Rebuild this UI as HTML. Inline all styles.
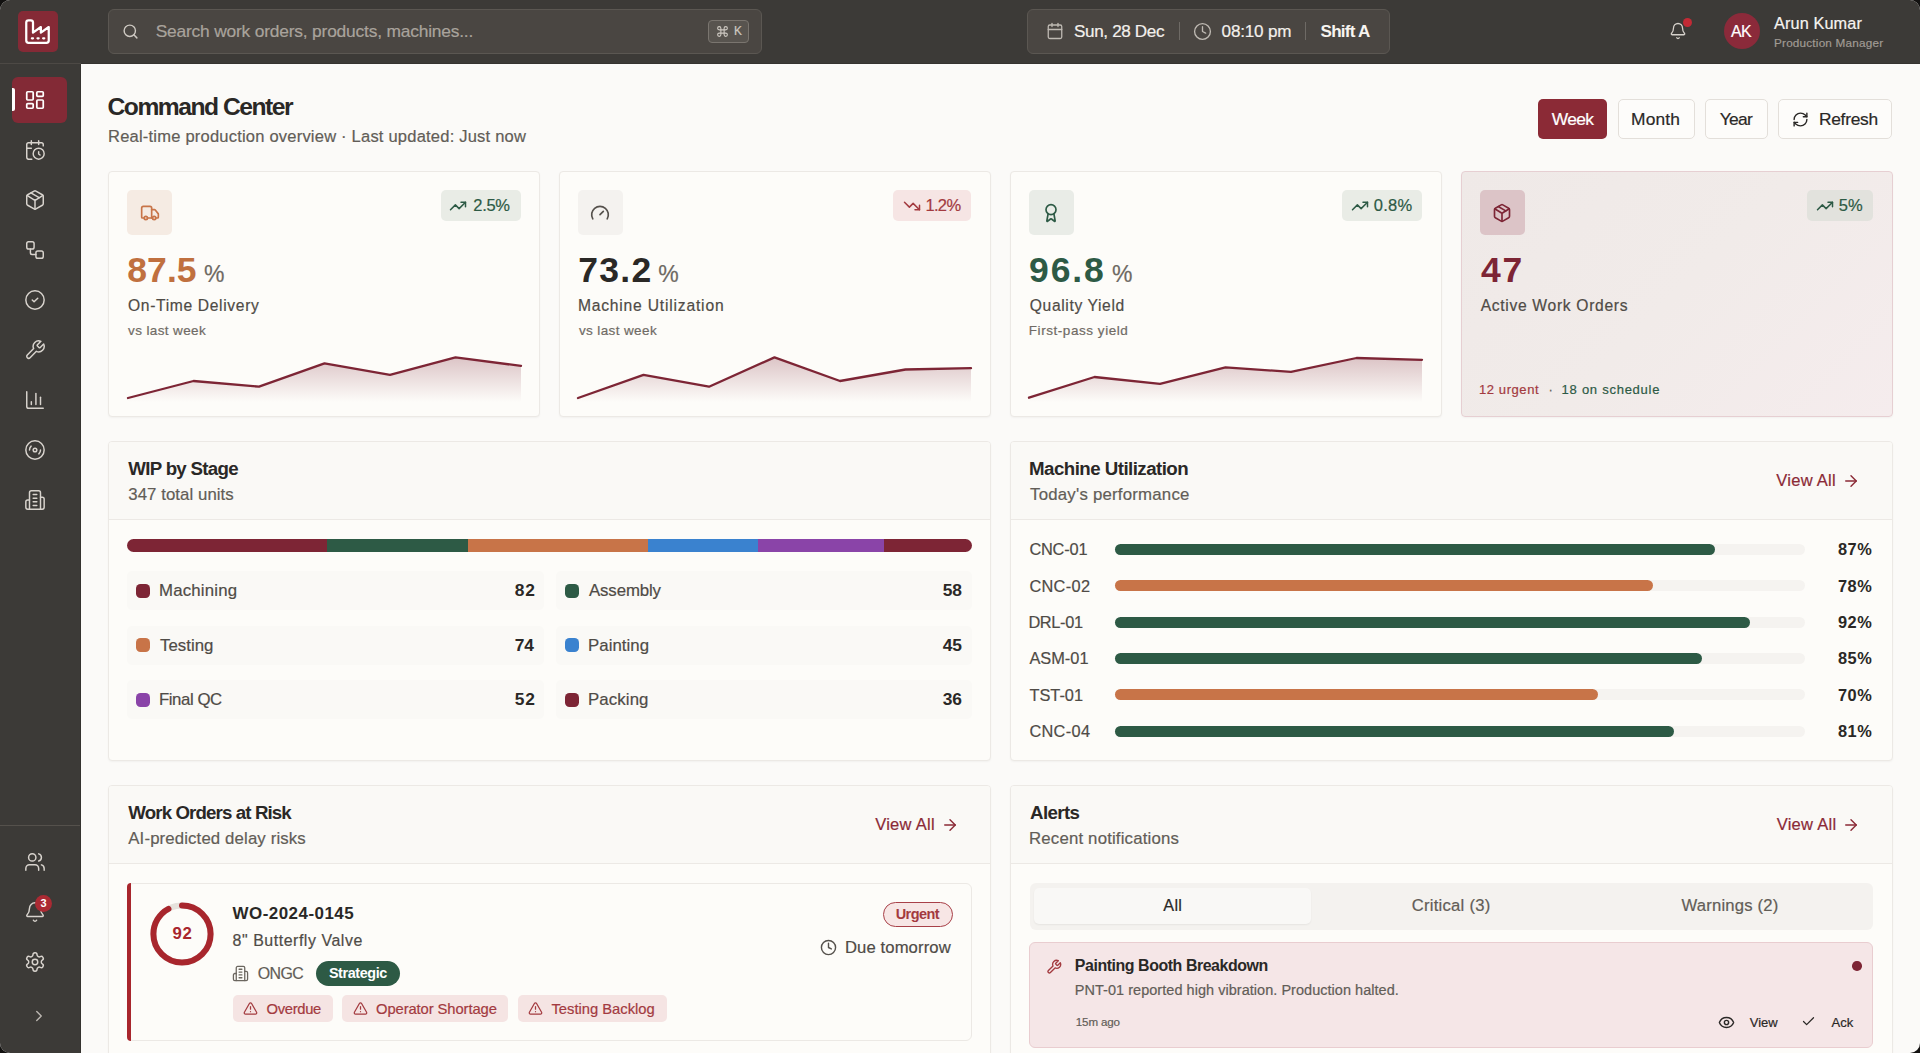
<!DOCTYPE html>
<html><head><meta charset="utf-8">
<style>
*{box-sizing:border-box;margin:0;padding:0}
html,body{width:1920px;height:1053px;overflow:hidden;background:#121110}
body{font-family:"Liberation Sans",sans-serif;color:#2a2826;position:relative}
.abs{position:absolute}
svg{display:block}
.ic{fill:none;stroke:currentColor;stroke-width:2;stroke-linecap:round;stroke-linejoin:round}
#app{position:absolute;left:0;top:0;width:1920px;height:1053px;background:#fbfaf8;border-radius:10px;overflow:hidden}
.t{white-space:nowrap;position:absolute;line-height:1}
.r{-webkit-text-stroke:0.2px currentColor}
</style></head>
<body>
<div id="app">
<div class="abs" style="left:0px;top:0px;width:1920px;height:63px;background:#3c3a37"></div>
<div class="abs" style="left:0px;top:63px;width:81px;height:1px;background:#4d4945"></div>
<div class="abs" style="left:81px;top:63px;width:1839px;height:1px;background:#353330"></div>
<div class="abs" style="left:17.5px;top:11px;width:40.5px;height:41px;background:#852a36;border-radius:5px"></div>
<svg class="abs ic" style="left:24px;top:17.8px;color:#fff;stroke-width:2" width="27" height="27" viewBox="0 0 24 24"><path d="M2 20a2 2 0 0 0 2 2h16a2 2 0 0 0 2-2V8l-7 5V8l-7 5V4a2 2 0 0 0-2-2H4a2 2 0 0 0-2 2Z"/><path d="M17 18h1"/><path d="M12 18h1"/><path d="M7 18h1"/></svg>
<div class="abs" style="left:108px;top:9px;width:654px;height:45px;background:#4a4642;border:1px solid #5b5752;border-radius:6px"></div>
<svg class="abs ic" style="left:122px;top:23px;color:#cdc8c1;stroke-width:2" width="17" height="17" viewBox="0 0 24 24"><circle cx="11" cy="11" r="8"/><path d="m21 21-4.3-4.3"/></svg>
<div class="t r" style="left:155.70px;top:22.97px;font-size:17.39px;color:#a9a39c;letter-spacing:-0.195px;">Search work orders, products, machines...</div>
<div class="abs" style="left:708px;top:20px;width:41px;height:23px;background:#58544f;border:1px solid #7a756f;border-radius:4px"></div>
<svg class="abs ic" style="left:715.5px;top:25px;color:#cfcac3;stroke-width:2" width="13" height="13" viewBox="0 0 24 24"><path d="M15 6v12a3 3 0 1 0 3-3H6a3 3 0 1 0 3 3V6a3 3 0 1 0-3 3h12a3 3 0 1 0-3-3"/></svg>
<div class="t r" style="left:734.00px;top:25.63px;font-size:11.88px;color:#cfcac3;">K</div>
<div class="abs" style="left:1027px;top:9px;width:363px;height:45px;background:#4a4642;border:1px solid #5b5752;border-radius:6px"></div>
<svg class="abs ic" style="left:1046px;top:22px;color:#bfbab3;stroke-width:1.7" width="18" height="18" viewBox="0 0 24 24"><rect x="3" y="4" width="18" height="18" rx="2"/><path d="M16 2v4"/><path d="M8 2v4"/><path d="M3 10h18"/></svg>
<div class="t r" style="left:1074.00px;top:23.42px;font-size:17.10px;color:#f3f0ec;letter-spacing:-0.353px;">Sun, 28 Dec</div>
<div class="abs" style="left:1179px;top:22px;width:1px;height:18px;background:#6e6a65"></div>
<svg class="abs ic" style="left:1193px;top:22px;color:#bfbab3;stroke-width:1.7" width="19" height="19" viewBox="0 0 24 24"><circle cx="12" cy="12" r="10"/><path d="M12 6v6l4 2"/></svg>
<div class="t r" style="left:1221.60px;top:23.42px;font-size:17.10px;color:#f3f0ec;letter-spacing:-0.205px;">08:10 pm</div>
<div class="abs" style="left:1305px;top:22px;width:1px;height:18px;background:#6e6a65"></div>
<div class="t" style="left:1320.60px;top:23.42px;font-size:17.10px;color:#f7f4f0;font-weight:700;letter-spacing:-0.788px;">Shift A</div>
<svg class="abs ic" style="left:1669px;top:22px;color:#d6d1cb;stroke-width:1.7" width="18" height="18" viewBox="0 0 24 24"><path d="M10.268 21a2 2 0 0 0 3.464 0"/><path d="M3.262 15.326A1 1 0 0 0 4 17h16a1 1 0 0 0 .74-1.673C19.41 13.956 18 12.499 18 8A6 6 0 0 0 6 8c0 4.499-1.411 5.956-2.738 7.326"/></svg>
<div class="abs" style="left:1683px;top:18px;width:9px;height:9px;background:#c22a35;border-radius:50%"></div>
<div class="abs" style="left:1724px;top:13px;width:36px;height:36px;background:#8b2a3a;border-radius:50%"></div>
<div class="t r" style="left:1731.00px;top:23.80px;font-size:15.94px;color:#ffffff;letter-spacing:-0.630px;">AK</div>
<div class="t r" style="left:1774.00px;top:14.64px;font-size:16.30px;color:#f7f4f0;letter-spacing:0.108px;">Arun Kumar</div>
<div class="t r" style="left:1774.00px;top:36.61px;font-size:11.74px;color:#a09b94;letter-spacing:0.198px;">Production Manager</div>
<div class="abs" style="left:0px;top:64px;width:80px;height:989px;background:#3c3a37"></div>
<div class="abs" style="left:80px;top:64px;width:1px;height:989px;background:#34322f"></div>
<div class="abs" style="left:12px;top:77px;width:55px;height:46px;background:#832a36;border-radius:6px"></div>
<div class="abs" style="left:12px;top:88px;width:3px;height:23px;background:#fff;border-radius:0 2px 2px 0"></div>
<svg class="abs ic" style="left:24px;top:89px;color:#ffffff;stroke-width:1.9" width="22" height="22" viewBox="0 0 24 24"><rect width="7" height="9" x="3" y="3" rx="1"/><rect width="7" height="5" x="14" y="3" rx="1"/><rect width="7" height="9" x="14" y="12" rx="1"/><rect width="7" height="5" x="3" y="16" rx="1"/></svg>
<svg class="abs ic" style="left:24px;top:139px;color:#d8d3cd;stroke-width:1.6" width="22" height="22" viewBox="0 0 24 24"><path d="M21 7.5V6a2 2 0 0 0-2-2H5a2 2 0 0 0-2 2v14a2 2 0 0 0 2 2h3.5"/><path d="M16 2v4"/><path d="M8 2v4"/><path d="M3 10h5"/><path d="M17.5 17.5 16 16.3V14"/><circle cx="16" cy="16" r="6"/></svg>
<svg class="abs ic" style="left:24px;top:189px;color:#d8d3cd;stroke-width:1.6" width="22" height="22" viewBox="0 0 24 24"><path d="M11 21.73a2 2 0 0 0 2 0l7-4A2 2 0 0 0 21 16V8a2 2 0 0 0-1-1.73l-7-4a2 2 0 0 0-2 0l-7 4A2 2 0 0 0 3 8v8a2 2 0 0 0 1 1.73z"/><path d="M12 22V12"/><path d="m3.3 7 7.703 4.734a2 2 0 0 0 1.994 0L20.7 7"/><path d="m7.5 4.27 9 5.15"/></svg>
<svg class="abs ic" style="left:24px;top:239px;color:#d8d3cd;stroke-width:1.6" width="22" height="22" viewBox="0 0 24 24"><rect width="8" height="8" x="3" y="3" rx="2"/><path d="M7 11v4a2 2 0 0 0 2 2h4"/><rect width="8" height="8" x="13" y="13" rx="2"/></svg>
<svg class="abs ic" style="left:24px;top:289px;color:#d8d3cd;stroke-width:1.6" width="22" height="22" viewBox="0 0 24 24"><circle cx="12" cy="12" r="10"/><path d="m9 12 2 2 4-4"/></svg>
<svg class="abs ic" style="left:24px;top:339px;color:#d8d3cd;stroke-width:1.6" width="22" height="22" viewBox="0 0 24 24"><path d="M14.7 6.3a1 1 0 0 0 0 1.4l1.6 1.6a1 1 0 0 0 1.4 0l3.77-3.77a6 6 0 0 1-7.94 7.94l-6.91 6.91a2.12 2.12 0 0 1-3-3l6.91-6.91a6 6 0 0 1 7.94-7.94l-3.76 3.76z"/></svg>
<svg class="abs ic" style="left:24px;top:389px;color:#d8d3cd;stroke-width:1.6" width="22" height="22" viewBox="0 0 24 24"><path d="M3 3v16a2 2 0 0 0 2 2h16"/><path d="M18 17V9"/><path d="M13 17V5"/><path d="M8 17v-3"/></svg>
<svg class="abs ic" style="left:24px;top:439px;color:#d8d3cd;stroke-width:1.6" width="22" height="22" viewBox="0 0 24 24"><circle cx="12" cy="12" r="10"/><path d="M6 12c0-1.7.7-3.2 1.8-4.2"/><circle cx="12" cy="12" r="2"/><path d="M18 12c0 1.7-.7 3.2-1.8 4.2"/></svg>
<svg class="abs ic" style="left:24px;top:489px;color:#d8d3cd;stroke-width:1.6" width="22" height="22" viewBox="0 0 24 24"><path d="M6 22V4a2 2 0 0 1 2-2h8a2 2 0 0 1 2 2v18Z"/><path d="M6 12H4a2 2 0 0 0-2 2v6a2 2 0 0 0 2 2h2"/><path d="M18 9h2a2 2 0 0 1 2 2v9a2 2 0 0 1-2 2h-2"/><path d="M10 6h4"/><path d="M10 10h4"/><path d="M10 14h4"/><path d="M10 18h4"/></svg>
<div class="abs" style="left:0px;top:825px;width:80px;height:1px;background:#55514c"></div>
<svg class="abs ic" style="left:24px;top:851px;color:#d8d3cd;stroke-width:1.6" width="22" height="22" viewBox="0 0 24 24"><path d="M16 21v-2a4 4 0 0 0-4-4H6a4 4 0 0 0-4 4v2"/><circle cx="9" cy="7" r="4"/><path d="M22 21v-2a4 4 0 0 0-3-3.87"/><path d="M16 3.13a4 4 0 0 1 0 7.75"/></svg>
<svg class="abs ic" style="left:24px;top:901px;color:#d8d3cd;stroke-width:1.6" width="22" height="22" viewBox="0 0 24 24"><path d="M10.268 21a2 2 0 0 0 3.464 0"/><path d="M3.262 15.326A1 1 0 0 0 4 17h16a1 1 0 0 0 .74-1.673C19.41 13.956 18 12.499 18 8A6 6 0 0 0 6 8c0 4.499-1.411 5.956-2.738 7.326"/></svg>
<div class="abs" style="left:35px;top:895px;width:17px;height:17px;background:#ab2a33;border-radius:50%"></div>
<div class="t" style="left:40.50px;top:898.47px;font-size:11.00px;color:#fff;font-weight:700;">3</div>
<svg class="abs ic" style="left:24px;top:951px;color:#d8d3cd;stroke-width:1.6" width="22" height="22" viewBox="0 0 24 24"><path d="M12.22 2h-.44a2 2 0 0 0-2 2v.18a2 2 0 0 1-1 1.73l-.43.25a2 2 0 0 1-2 0l-.15-.08a2 2 0 0 0-2.73.73l-.22.38a2 2 0 0 0 .73 2.73l.15.1a2 2 0 0 1 1 1.72v.51a2 2 0 0 1-1 1.74l-.15.09a2 2 0 0 0-.73 2.73l.22.38a2 2 0 0 0 2.73.73l.15-.08a2 2 0 0 1 2 0l.43.25a2 2 0 0 1 1 1.73V20a2 2 0 0 0 2 2h.44a2 2 0 0 0 2-2v-.18a2 2 0 0 1 1-1.73l.43-.25a2 2 0 0 1 2 0l.15.08a2 2 0 0 0 2.73-.73l.22-.39a2 2 0 0 0-.73-2.73l-.15-.08a2 2 0 0 1-1-1.74v-.5a2 2 0 0 1 1-1.74l.15-.09a2 2 0 0 0 .73-2.73l-.22-.38a2 2 0 0 0-2.73-.73l-.15.08a2 2 0 0 1-2 0l-.43-.25a2 2 0 0 1-1-1.73V4a2 2 0 0 0-2-2z"/><circle cx="12" cy="12" r="3"/></svg>
<svg class="abs ic" style="left:30px;top:1007px;color:#bdb8b2;stroke-width:1.8" width="18" height="18" viewBox="0 0 24 24"><path d="m9 18 6-6-6-6"/></svg>
<div class="t" style="left:107.50px;top:94.83px;font-size:24.64px;color:#2a2826;font-weight:700;letter-spacing:-1.473px;">Command Center</div>
<div class="t r" style="left:108.00px;top:128.61px;font-size:16.52px;color:#625d57;letter-spacing:0.212px;">Real-time production overview · Last updated: Just now</div>
<div class="abs" style="left:1538px;top:99px;width:69px;height:40px;background:#8b2a36;border-radius:5px"></div>
<div class="t r" style="left:1551.80px;top:110.97px;font-size:17.39px;color:#fff;letter-spacing:-0.637px;">Week</div>
<div class="abs" style="left:1617.5px;top:99px;width:77px;height:40px;background:#fdfcfa;border:1px solid #e3dfda;border-radius:5px"></div>
<div class="abs" style="left:1704.5px;top:99px;width:63px;height:40px;background:#fdfcfa;border:1px solid #e3dfda;border-radius:5px"></div>
<div class="abs" style="left:1778px;top:99px;width:114px;height:40px;background:#fdfcfa;border:1px solid #e3dfda;border-radius:5px"></div>
<div class="t r" style="left:1631.00px;top:110.97px;font-size:17.39px;color:#2a2826;letter-spacing:0.168px;">Month</div>
<div class="t r" style="left:1719.80px;top:110.97px;font-size:17.39px;color:#2a2826;letter-spacing:-0.706px;">Year</div>
<svg class="abs ic" style="left:1792px;top:111px;color:#2a2826;stroke-width:2" width="17" height="17" viewBox="0 0 24 24"><path d="M3 12a9 9 0 0 1 9-9 9.75 9.75 0 0 1 6.74 2.74L21 8"/><path d="M21 3v5h-5"/><path d="M21 12a9 9 0 0 1-9 9 9.75 9.75 0 0 1-6.74-2.74L3 16"/><path d="M8 16H3v5"/></svg>
<div class="t r" style="left:1819.00px;top:110.97px;font-size:17.39px;color:#2a2826;letter-spacing:-0.296px;">Refresh</div>
<div class="abs" style="left:108.0px;top:171px;width:431.9px;height:246px;background:#fdfcf9;border:1px solid #ece9e5;border-radius:4px;box-shadow:0 1px 2px rgba(0,0,0,0.04)"></div>
<div class="abs" style="left:127.0px;top:190px;width:45px;height:45px;background:#f5ebe3;border-radius:5px"></div>
<svg class="abs ic" style="left:139.5px;top:202.5px;color:#c87448;stroke-width:2" width="20" height="20" viewBox="0 0 24 24"><path d="M14 18V6a2 2 0 0 0-2-2H4a2 2 0 0 0-2 2v11a1 1 0 0 0 1 1h2"/><path d="M15 18H9"/><path d="M19 18h2a1 1 0 0 0 1-1v-3.65a1 1 0 0 0-.22-.624l-3.48-4.35A1 1 0 0 0 17.52 8H14"/><circle cx="17" cy="18" r="2"/><circle cx="7" cy="18" r="2"/></svg>
<div class="abs" style="left:440.5px;top:190px;width:80px;height:31px;background:#e9ece6;border-radius:5px"></div>
<svg class="abs ic" style="left:449.3px;top:197px;color:#2d5a45;stroke-width:2" width="18" height="18" viewBox="0 0 24 24"><path d="M22 7 13.5 15.5 8.5 10.5 2 17"/><path d="M16 7h6v6"/></svg>
<div class="t r" style="left:473.30px;top:197.91px;font-size:16.52px;color:#2d5a45;letter-spacing:-0.320px;">2.5%</div>
<div class="t" style="left:127.30px;top:253.13px;font-size:35.50px;color:#c0703f;font-weight:700;letter-spacing:0.050px;">87.5</div>
<div class="t r" style="left:204.00px;top:263.49px;font-size:23.00px;color:#6e6963;">%</div>
<div class="t r" style="left:128.00px;top:298.44px;font-size:15.65px;color:#4f4b46;letter-spacing:0.649px;">On-Time Delivery</div>
<div class="t r" style="left:128.00px;top:324.18px;font-size:13.50px;color:#706b65;letter-spacing:0.384px;">vs last week</div>
<svg class="abs" style="left:127.5px;top:350px;overflow:visible" width="393.0" height="52"><defs><linearGradient id="g108.0" x1="0" y1="0" x2="0" y2="1"><stop offset="0" stop-color="#7d2535" stop-opacity="0.26"/><stop offset="1" stop-color="#7d2535" stop-opacity="0"/></linearGradient></defs><path d="M0,48.0 L0.0,48.0 L65.5,31.0 L131.0,36.7 L196.5,13.3 L262.0,24.9 L327.5,7.4 L393.0,15.9 L393.0,52 L0,52 Z" fill="url(#g108.0)"/><polyline points="0.0,48.0 65.5,31.0 131.0,36.7 196.5,13.3 262.0,24.9 327.5,7.4 393.0,15.9" fill="none" stroke="#7d2535" stroke-width="2.3" stroke-linejoin="round" stroke-linecap="round"/></svg>
<div class="abs" style="left:558.9px;top:171px;width:431.9px;height:246px;background:#fdfcf9;border:1px solid #ece9e5;border-radius:4px;box-shadow:0 1px 2px rgba(0,0,0,0.04)"></div>
<div class="abs" style="left:577.9px;top:190px;width:45px;height:45px;background:#f4f2ef;border-radius:5px"></div>
<svg class="abs ic" style="left:590.4px;top:202.5px;color:#55514c;stroke-width:2" width="20" height="20" viewBox="0 0 24 24"><path d="m12 14 4-4"/><path d="M3.34 19a10 10 0 1 1 17.32 0"/></svg>
<div class="abs" style="left:893.4px;top:190px;width:78px;height:31px;background:#f6e5e4;border-radius:5px"></div>
<svg class="abs ic" style="left:903.3px;top:197px;color:#a33a3f;stroke-width:2" width="18" height="18" viewBox="0 0 24 24"><path d="M22 17 13.5 8.5 8.5 13.5 2 7"/><path d="M16 17h6v-6"/></svg>
<div class="t r" style="left:925.40px;top:197.91px;font-size:16.52px;color:#a33a3f;letter-spacing:-0.653px;">1.2%</div>
<div class="t" style="left:578.20px;top:253.13px;font-size:35.50px;color:#2a2826;font-weight:700;letter-spacing:1.317px;">73.2</div>
<div class="t r" style="left:658.20px;top:263.49px;font-size:23.00px;color:#6e6963;">%</div>
<div class="t r" style="left:577.90px;top:298.44px;font-size:15.65px;color:#4f4b46;letter-spacing:0.802px;">Machine Utilization</div>
<div class="t r" style="left:578.90px;top:324.18px;font-size:13.50px;color:#706b65;letter-spacing:0.384px;">vs last week</div>
<svg class="abs" style="left:578.4px;top:350px;overflow:visible" width="393.0" height="52"><defs><linearGradient id="g558.9" x1="0" y1="0" x2="0" y2="1"><stop offset="0" stop-color="#7d2535" stop-opacity="0.26"/><stop offset="1" stop-color="#7d2535" stop-opacity="0"/></linearGradient></defs><path d="M0,48.0 L0.0,48.0 L65.5,24.9 L131.0,36.7 L196.5,7.4 L262.0,31.0 L327.5,19.5 L393.0,18.2 L393.0,52 L0,52 Z" fill="url(#g558.9)"/><polyline points="0.0,48.0 65.5,24.9 131.0,36.7 196.5,7.4 262.0,31.0 327.5,19.5 393.0,18.2" fill="none" stroke="#7d2535" stroke-width="2.3" stroke-linejoin="round" stroke-linecap="round"/></svg>
<div class="abs" style="left:1009.8px;top:171px;width:431.9px;height:246px;background:#fdfcf9;border:1px solid #ece9e5;border-radius:4px;box-shadow:0 1px 2px rgba(0,0,0,0.04)"></div>
<div class="abs" style="left:1028.8px;top:190px;width:45px;height:45px;background:#e9ece7;border-radius:5px"></div>
<svg class="abs ic" style="left:1041.3px;top:202.5px;color:#2d5a45;stroke-width:2" width="20" height="20" viewBox="0 0 24 24"><path d="m15.477 12.89 1.515 8.526a.5.5 0 0 1-.81.47l-3.58-2.687a1 1 0 0 0-1.197 0l-3.586 2.686a.5.5 0 0 1-.81-.469l1.514-8.526"/><circle cx="12" cy="8" r="6"/></svg>
<div class="abs" style="left:1341.7999999999997px;top:190px;width:80.5px;height:31px;background:#e9ece6;border-radius:5px"></div>
<svg class="abs ic" style="left:1350.5px;top:197px;color:#2d5a45;stroke-width:2" width="18" height="18" viewBox="0 0 24 24"><path d="M22 7 13.5 15.5 8.5 10.5 2 17"/><path d="M16 7h6v6"/></svg>
<div class="t r" style="left:1373.75px;top:197.91px;font-size:16.52px;color:#2d5a45;letter-spacing:0.264px;">0.8%</div>
<div class="t" style="left:1029.10px;top:253.13px;font-size:35.50px;color:#2d5a45;font-weight:700;letter-spacing:1.883px;">96.8</div>
<div class="t r" style="left:1111.90px;top:263.49px;font-size:23.00px;color:#6e6963;">%</div>
<div class="t r" style="left:1029.80px;top:298.44px;font-size:15.65px;color:#4f4b46;letter-spacing:0.623px;">Quality Yield</div>
<div class="t r" style="left:1028.80px;top:324.18px;font-size:13.50px;color:#706b65;letter-spacing:0.549px;">First-pass yield</div>
<svg class="abs" style="left:1029.3px;top:350px;overflow:visible" width="393.0" height="52"><defs><linearGradient id="g1009.8" x1="0" y1="0" x2="0" y2="1"><stop offset="0" stop-color="#7d2535" stop-opacity="0.26"/><stop offset="1" stop-color="#7d2535" stop-opacity="0"/></linearGradient></defs><path d="M0,47.7 L0.0,47.7 L65.5,27.0 L131.0,33.8 L196.5,17.4 L262.0,21.9 L327.5,8.0 L393.0,9.8 L393.0,52 L0,52 Z" fill="url(#g1009.8)"/><polyline points="0.0,47.7 65.5,27.0 131.0,33.8 196.5,17.4 262.0,21.9 327.5,8.0 393.0,9.8" fill="none" stroke="#7d2535" stroke-width="2.3" stroke-linejoin="round" stroke-linecap="round"/></svg>
<div class="abs" style="left:1460.7px;top:171px;width:431.9px;height:246px;background:linear-gradient(135deg,#efe9e7 0%,#f1ebe9 50%,#f5eced 100%);border:1px solid #e6cfd2;border-radius:4px;box-shadow:0 1px 2px rgba(0,0,0,0.04)"></div>
<div class="abs" style="left:1479.7px;top:190px;width:45px;height:45px;background:#dcc4c7;border-radius:5px"></div>
<svg class="abs ic" style="left:1492.2px;top:202.5px;color:#7d2535;stroke-width:2" width="20" height="20" viewBox="0 0 24 24"><path d="M11 21.73a2 2 0 0 0 2 0l7-4A2 2 0 0 0 21 16V8a2 2 0 0 0-1-1.73l-7-4a2 2 0 0 0-2 0l-7 4A2 2 0 0 0 3 8v8a2 2 0 0 0 1 1.73z"/><path d="M12 22V12"/><path d="m3.3 7 7.703 4.734a2 2 0 0 0 1.994 0L20.7 7"/><path d="m7.5 4.27 9 5.15"/></svg>
<div class="abs" style="left:1807.1999999999998px;top:190px;width:66px;height:31px;background:#e2e2dd;border-radius:5px"></div>
<svg class="abs ic" style="left:1815.5px;top:197px;color:#2d5a45;stroke-width:2" width="18" height="18" viewBox="0 0 24 24"><path d="M22 7 13.5 15.5 8.5 10.5 2 17"/><path d="M16 7h6v6"/></svg>
<div class="t r" style="left:1838.75px;top:197.91px;font-size:16.52px;color:#2d5a45;letter-spacing:0.065px;">5%</div>
<div class="t" style="left:1481.00px;top:253.13px;font-size:35.50px;color:#7d2535;font-weight:700;letter-spacing:1.857px;">47</div>
<div class="t r" style="left:1480.70px;top:298.44px;font-size:15.65px;color:#4f4b46;letter-spacing:0.678px;">Active Work Orders</div>
<div class="t r" style="left:1479.00px;top:383.25px;font-size:13.04px;color:#a33a3f;letter-spacing:0.569px;">12 urgent</div>
<div class="t r" style="left:1548.50px;top:383.26px;font-size:13.00px;color:#625d57;">·</div>
<div class="t r" style="left:1561.60px;top:383.25px;font-size:13.04px;color:#2d5a45;letter-spacing:0.727px;">18 on schedule</div>
<div class="abs" style="left:108px;top:441px;width:882.75px;height:320px;background:#fdfcf9;border:1px solid #ece9e5;border-radius:4px;box-shadow:0 1px 2px rgba(0,0,0,0.04)"></div>
<div class="abs" style="left:109px;top:442px;width:880.75px;height:77px;background:#faf9f6;border-radius:3px 3px 0 0"></div>
<div class="abs" style="left:109px;top:519px;width:880.75px;height:1px;background:#ece9e5"></div>
<div class="t" style="left:128.30px;top:460.06px;font-size:18.70px;color:#2a2826;font-weight:700;letter-spacing:-0.698px;">WIP by Stage</div>
<div class="t r" style="left:128.30px;top:487.26px;font-size:16.81px;color:#625d57;letter-spacing:0.058px;">347 total units</div>
<div class="abs" style="left:127px;top:538.5px;width:845px;height:13px;border-radius:7px;overflow:hidden;display:flex"><div style="width:23.6311%;height:100%;background:#7d2535"></div><div style="width:16.7147%;height:100%;background:#2d5a45"></div><div style="width:21.3256%;height:100%;background:#c87448"></div><div style="width:12.9683%;height:100%;background:#3a82cf"></div><div style="width:14.9856%;height:100%;background:#8a44a8"></div><div style="width:10.3746%;height:100%;background:#7d2535"></div></div>
<div class="abs" style="left:127px;top:571.0px;width:417px;height:39px;background:#faf9f6;border-radius:5px"></div>
<div class="abs" style="left:136px;top:583.5px;width:14px;height:14px;background:#7d2535;border-radius:4.5px"></div>
<div class="t r" style="left:159.00px;top:582.86px;font-size:16.81px;color:#4f4b46;letter-spacing:0.185px;">Machining</div>
<div class="t" style="left:514.80px;top:582.47px;font-size:17.39px;color:#2a2826;font-weight:700;letter-spacing:0.737px;">82</div>
<div class="abs" style="left:556px;top:571.0px;width:416px;height:39px;background:#faf9f6;border-radius:5px"></div>
<div class="abs" style="left:565px;top:583.5px;width:14px;height:14px;background:#2d5a45;border-radius:4.5px"></div>
<div class="t r" style="left:589.00px;top:582.86px;font-size:16.81px;color:#4f4b46;letter-spacing:-0.115px;">Assembly</div>
<div class="t" style="left:942.80px;top:582.47px;font-size:17.39px;color:#2a2826;font-weight:700;letter-spacing:-0.263px;">58</div>
<div class="abs" style="left:127px;top:625.5px;width:417px;height:39px;background:#faf9f6;border-radius:5px"></div>
<div class="abs" style="left:136px;top:638.0px;width:14px;height:14px;background:#c87448;border-radius:4.5px"></div>
<div class="t r" style="left:160.00px;top:638.36px;font-size:16.81px;color:#4f4b46;letter-spacing:0.020px;">Testing</div>
<div class="t" style="left:514.80px;top:636.97px;font-size:17.39px;color:#2a2826;font-weight:700;letter-spacing:-0.263px;">74</div>
<div class="abs" style="left:556px;top:625.5px;width:416px;height:39px;background:#faf9f6;border-radius:5px"></div>
<div class="abs" style="left:565px;top:638.0px;width:14px;height:14px;background:#3a82cf;border-radius:4.5px"></div>
<div class="t r" style="left:588.00px;top:638.36px;font-size:16.81px;color:#4f4b46;letter-spacing:0.049px;">Painting</div>
<div class="t" style="left:942.80px;top:636.97px;font-size:17.39px;color:#2a2826;font-weight:700;letter-spacing:-0.263px;">45</div>
<div class="abs" style="left:127px;top:680.0px;width:417px;height:39px;background:#faf9f6;border-radius:5px"></div>
<div class="abs" style="left:136px;top:692.5px;width:14px;height:14px;background:#8a44a8;border-radius:4.5px"></div>
<div class="t r" style="left:159.00px;top:691.86px;font-size:16.81px;color:#4f4b46;letter-spacing:-0.448px;">Final QC</div>
<div class="t" style="left:514.80px;top:691.47px;font-size:17.39px;color:#2a2826;font-weight:700;letter-spacing:0.737px;">52</div>
<div class="abs" style="left:556px;top:680.0px;width:416px;height:39px;background:#faf9f6;border-radius:5px"></div>
<div class="abs" style="left:565px;top:692.5px;width:14px;height:14px;background:#7d2535;border-radius:4.5px"></div>
<div class="t r" style="left:588.00px;top:691.86px;font-size:16.81px;color:#4f4b46;letter-spacing:0.114px;">Packing</div>
<div class="t" style="left:942.80px;top:691.47px;font-size:17.39px;color:#2a2826;font-weight:700;letter-spacing:-0.263px;">36</div>
<div class="abs" style="left:1009.75px;top:441px;width:882.75px;height:320px;background:#fdfcf9;border:1px solid #ece9e5;border-radius:4px;box-shadow:0 1px 2px rgba(0,0,0,0.04)"></div>
<div class="abs" style="left:1010.75px;top:442px;width:880.75px;height:77px;background:#faf9f6;border-radius:3px 3px 0 0"></div>
<div class="abs" style="left:1010.75px;top:519px;width:880.75px;height:1px;background:#ece9e5"></div>
<div class="t" style="left:1029.05px;top:460.06px;font-size:18.70px;color:#2a2826;font-weight:700;letter-spacing:-0.535px;">Machine Utilization</div>
<div class="t r" style="left:1030.05px;top:487.26px;font-size:16.81px;color:#625d57;letter-spacing:0.220px;">Today&#x27;s performance</div>
<div class="t r" style="left:1776.30px;top:472.51px;font-size:16.52px;color:#8b2a36;letter-spacing:0.261px;">View All</div>
<svg class="abs ic" style="left:1841.6px;top:471.6px;color:#8b2a36;stroke-width:1.9" width="18" height="18" viewBox="0 0 24 24"><path d="M5 12h14"/><path d="m12 5 7 7-7 7"/></svg>
<div class="t r" style="left:1029.40px;top:541.08px;font-size:16.38px;color:#4f4b46;letter-spacing:-0.198px;">CNC-01</div>
<div class="abs" style="left:1115px;top:544.1px;width:690px;height:11px;background:#f5f3f0;border-radius:6px"></div>
<div class="abs" style="left:1115px;top:544.1px;width:600.3px;height:11px;background:#2d5a45;border-radius:6px"></div>
<div class="t" style="left:1838.00px;top:541.08px;font-size:16.38px;color:#2a2826;font-weight:700;letter-spacing:0.502px;">87%</div>
<div class="t r" style="left:1029.40px;top:578.41px;font-size:16.38px;color:#4f4b46;letter-spacing:0.302px;">CNC-02</div>
<div class="abs" style="left:1115px;top:580.4300000000001px;width:690px;height:11px;background:#f5f3f0;border-radius:6px"></div>
<div class="abs" style="left:1115px;top:580.4300000000001px;width:538.2px;height:11px;background:#c87448;border-radius:6px"></div>
<div class="t" style="left:1838.00px;top:578.41px;font-size:16.38px;color:#2a2826;font-weight:700;letter-spacing:0.502px;">78%</div>
<div class="t r" style="left:1028.40px;top:613.74px;font-size:16.38px;color:#4f4b46;letter-spacing:-0.355px;">DRL-01</div>
<div class="abs" style="left:1115px;top:616.76px;width:690px;height:11px;background:#f5f3f0;border-radius:6px"></div>
<div class="abs" style="left:1115px;top:616.76px;width:634.8px;height:11px;background:#2d5a45;border-radius:6px"></div>
<div class="t" style="left:1838.00px;top:613.74px;font-size:16.38px;color:#2a2826;font-weight:700;letter-spacing:0.502px;">92%</div>
<div class="t r" style="left:1029.40px;top:650.07px;font-size:16.38px;color:#4f4b46;">ASM-01</div>
<div class="abs" style="left:1115px;top:653.09px;width:690px;height:11px;background:#f5f3f0;border-radius:6px"></div>
<div class="abs" style="left:1115px;top:653.09px;width:586.5px;height:11px;background:#2d5a45;border-radius:6px"></div>
<div class="t" style="left:1838.00px;top:650.07px;font-size:16.38px;color:#2a2826;font-weight:700;letter-spacing:0.502px;">85%</div>
<div class="t r" style="left:1029.40px;top:687.40px;font-size:16.38px;color:#4f4b46;">TST-01</div>
<div class="abs" style="left:1115px;top:689.4200000000001px;width:690px;height:11px;background:#f5f3f0;border-radius:6px"></div>
<div class="abs" style="left:1115px;top:689.4200000000001px;width:483.0px;height:11px;background:#c87448;border-radius:6px"></div>
<div class="t" style="left:1838.00px;top:687.40px;font-size:16.38px;color:#2a2826;font-weight:700;letter-spacing:0.502px;">70%</div>
<div class="t r" style="left:1029.40px;top:722.73px;font-size:16.38px;color:#4f4b46;letter-spacing:0.302px;">CNC-04</div>
<div class="abs" style="left:1115px;top:725.75px;width:690px;height:11px;background:#f5f3f0;border-radius:6px"></div>
<div class="abs" style="left:1115px;top:725.75px;width:558.9px;height:11px;background:#2d5a45;border-radius:6px"></div>
<div class="t" style="left:1838.00px;top:722.73px;font-size:16.38px;color:#2a2826;font-weight:700;letter-spacing:0.502px;">81%</div>
<div class="abs" style="left:108px;top:785px;width:882.75px;height:300px;background:#fdfcf9;border:1px solid #ece9e5;border-radius:4px;box-shadow:0 1px 2px rgba(0,0,0,0.04)"></div>
<div class="abs" style="left:109px;top:786px;width:880.75px;height:77px;background:#faf9f6;border-radius:3px 3px 0 0"></div>
<div class="abs" style="left:109px;top:863px;width:880.75px;height:1px;background:#ece9e5"></div>
<div class="t" style="left:128.30px;top:804.06px;font-size:18.70px;color:#2a2826;font-weight:700;letter-spacing:-0.885px;">Work Orders at Risk</div>
<div class="t r" style="left:128.30px;top:831.26px;font-size:16.81px;color:#625d57;letter-spacing:0.123px;">AI-predicted delay risks</div>
<div class="t r" style="left:875.20px;top:816.51px;font-size:16.52px;color:#8b2a36;letter-spacing:0.261px;">View All</div>
<svg class="abs ic" style="left:940.5px;top:815.6px;color:#8b2a36;stroke-width:1.9" width="18" height="18" viewBox="0 0 24 24"><path d="M5 12h14"/><path d="m12 5 7 7-7 7"/></svg>
<div class="abs" style="left:127px;top:883.4px;width:845px;height:158px;background:#fdfcf9;border:1px solid #ece9e5;border-radius:6px"></div>
<div class="abs" style="left:127px;top:883.4px;width:4px;height:158px;background:#a8262d;border-radius:6px 0 0 6px"></div>
<svg class="abs" style="left:150px;top:901.5px" width="64" height="64" viewBox="0 0 64 64"><circle cx="32" cy="32" r="28.6" fill="none" stroke="#e6e2dd" stroke-width="6"/><circle cx="32" cy="32" r="28.6" fill="none" stroke="#a8262d" stroke-width="6" stroke-dasharray="165.32 179.70" transform="rotate(-90 32 32)" stroke-linecap="round"/></svg>
<div class="t" style="left:172.40px;top:926.46px;font-size:16.80px;color:#a8262d;font-weight:700;letter-spacing:0.667px;">92</div>
<div class="t" style="left:232.60px;top:906.34px;font-size:16.96px;color:#2a2826;font-weight:700;letter-spacing:0.475px;">WO-2024-0145</div>
<div class="t r" style="left:232.60px;top:933.20px;font-size:15.94px;color:#4f4b46;letter-spacing:0.538px;">8&quot; Butterfly Valve</div>
<svg class="abs ic" style="left:232px;top:965px;color:#6b665f;stroke-width:1.8" width="17" height="17" viewBox="0 0 24 24"><path d="M6 22V4a2 2 0 0 1 2-2h8a2 2 0 0 1 2 2v18Z"/><path d="M6 12H4a2 2 0 0 0-2 2v6a2 2 0 0 0 2 2h2"/><path d="M18 9h2a2 2 0 0 1 2 2v9a2 2 0 0 1-2 2h-2"/><path d="M10 6h4"/><path d="M10 10h4"/><path d="M10 14h4"/><path d="M10 18h4"/></svg>
<div class="t r" style="left:257.80px;top:966.00px;font-size:15.94px;color:#625d57;letter-spacing:-0.601px;">ONGC</div>
<div class="abs" style="left:316.2px;top:961.2px;width:84px;height:24.6px;background:#2d5a45;border-radius:13px"></div>
<div class="t" style="left:328.90px;top:965.95px;font-size:14.35px;color:#fff;font-weight:700;letter-spacing:-0.381px;">Strategic</div>
<div class="abs" style="left:232.6px;top:995.3px;width:100.2px;height:26.7px;background:#f5e4e3;border-radius:5px"></div>
<svg class="abs ic" style="left:243.1px;top:1001px;color:#a33a3f;stroke-width:2" width="15" height="15" viewBox="0 0 24 24"><path d="m21.73 18-8-14a2 2 0 0 0-3.48 0l-8 14A2 2 0 0 0 4 21h16a2 2 0 0 0 1.73-3"/><path d="M12 9v4"/><path d="M12 17h.01"/></svg>
<div class="t r" style="left:266.60px;top:1001.88px;font-size:14.78px;color:#a33a3f;letter-spacing:-0.320px;">Overdue</div>
<div class="abs" style="left:342px;top:995.3px;width:166px;height:26.7px;background:#f5e4e3;border-radius:5px"></div>
<svg class="abs ic" style="left:352.5px;top:1001px;color:#a33a3f;stroke-width:2" width="15" height="15" viewBox="0 0 24 24"><path d="m21.73 18-8-14a2 2 0 0 0-3.48 0l-8 14A2 2 0 0 0 4 21h16a2 2 0 0 0 1.73-3"/><path d="M12 9v4"/><path d="M12 17h.01"/></svg>
<div class="t r" style="left:376.00px;top:1001.88px;font-size:14.78px;color:#a33a3f;letter-spacing:-0.087px;">Operator Shortage</div>
<div class="abs" style="left:517.5px;top:995.3px;width:149.4px;height:26.7px;background:#f5e4e3;border-radius:5px"></div>
<svg class="abs ic" style="left:528.0px;top:1001px;color:#a33a3f;stroke-width:2" width="15" height="15" viewBox="0 0 24 24"><path d="m21.73 18-8-14a2 2 0 0 0-3.48 0l-8 14A2 2 0 0 0 4 21h16a2 2 0 0 0 1.73-3"/><path d="M12 9v4"/><path d="M12 17h.01"/></svg>
<div class="t r" style="left:551.50px;top:1001.88px;font-size:14.78px;color:#a33a3f;letter-spacing:-0.015px;">Testing Backlog</div>
<div class="abs" style="left:883px;top:902.1px;width:69.6px;height:24.6px;background:#f7e6e5;border:1px solid #a84048;border-radius:13px"></div>
<div class="t" style="left:895.70px;top:907.42px;font-size:14.49px;color:#a33a3f;font-weight:700;letter-spacing:-0.570px;">Urgent</div>
<svg class="abs ic" style="left:820px;top:939px;color:#55514c;stroke-width:2" width="17" height="17" viewBox="0 0 24 24"><circle cx="12" cy="12" r="10"/><path d="M12 6v6l4 2"/></svg>
<div class="t r" style="left:844.90px;top:939.58px;font-size:16.67px;color:#4f4b46;letter-spacing:0.112px;">Due tomorrow</div>
<div class="abs" style="left:1009.75px;top:785px;width:882.75px;height:300px;background:#fdfcf9;border:1px solid #ece9e5;border-radius:4px;box-shadow:0 1px 2px rgba(0,0,0,0.04)"></div>
<div class="abs" style="left:1010.75px;top:786px;width:880.75px;height:77px;background:#faf9f6;border-radius:3px 3px 0 0"></div>
<div class="abs" style="left:1010.75px;top:863px;width:880.75px;height:1px;background:#ece9e5"></div>
<div class="t" style="left:1030.05px;top:804.06px;font-size:18.70px;color:#2a2826;font-weight:700;letter-spacing:-0.615px;">Alerts</div>
<div class="t r" style="left:1029.05px;top:831.26px;font-size:16.81px;color:#625d57;letter-spacing:0.169px;">Recent notifications</div>
<div class="t r" style="left:1776.70px;top:816.51px;font-size:16.52px;color:#8b2a36;letter-spacing:0.261px;">View All</div>
<svg class="abs ic" style="left:1842.0px;top:815.6px;color:#8b2a36;stroke-width:1.9" width="18" height="18" viewBox="0 0 24 24"><path d="M5 12h14"/><path d="m12 5 7 7-7 7"/></svg>
<div class="abs" style="left:1029.7px;top:882.7px;width:843.3px;height:47px;background:#f4f2ef;border-radius:6px"></div>
<div class="abs" style="left:1034.4px;top:888px;width:277px;height:36px;background:#f9f8f6;border-radius:5px;box-shadow:0 1px 2px rgba(0,0,0,0.06)"></div>
<div class="t r" style="left:1163.30px;top:897.05px;font-size:16.23px;color:#2a2826;letter-spacing:0.289px;">All</div>
<div class="t r" style="left:1411.70px;top:897.58px;font-size:16.67px;color:#625d57;letter-spacing:0.242px;">Critical (3)</div>
<div class="t r" style="left:1681.50px;top:897.58px;font-size:16.67px;color:#625d57;letter-spacing:0.185px;">Warnings (2)</div>
<div class="abs" style="left:1029px;top:942px;width:844px;height:105.5px;background:#f5e6e7;border:1px solid #e9cdd0;border-radius:6px"></div>
<svg class="abs ic" style="left:1046px;top:958.5px;color:#a33a3f;stroke-width:2" width="16" height="16" viewBox="0 0 24 24"><path d="M14.7 6.3a1 1 0 0 0 0 1.4l1.6 1.6a1 1 0 0 0 1.4 0l3.77-3.77a6 6 0 0 1-7.94 7.94l-6.91 6.91a2.12 2.12 0 0 1-3-3l6.91-6.91a6 6 0 0 1 7.94-7.94l-3.76 3.76z"/></svg>
<div class="t" style="left:1074.80px;top:958.00px;font-size:15.94px;color:#2a2826;font-weight:700;letter-spacing:-0.444px;">Painting Booth Breakdown</div>
<div class="t r" style="left:1074.80px;top:983.42px;font-size:14.49px;color:#625d57;letter-spacing:0.040px;">PNT-01 reported high vibration. Production halted.</div>
<div class="t r" style="left:1075.80px;top:1015.78px;font-size:11.60px;color:#625d57;letter-spacing:-0.145px;">15m ago</div>
<div class="abs" style="left:1852px;top:961px;width:9.5px;height:9.5px;background:#7d2535;border-radius:50%"></div>
<svg class="abs ic" style="left:1718px;top:1014px;color:#2a2826;stroke-width:2" width="17" height="17" viewBox="0 0 24 24"><path d="M2.062 12.348a1 1 0 0 1 0-.696 10.75 10.75 0 0 1 19.876 0 1 1 0 0 1 0 .696 10.75 10.75 0 0 1-19.876 0"/><circle cx="12" cy="12" r="3"/></svg>
<div class="t r" style="left:1749.80px;top:1016.46px;font-size:13.00px;color:#2a2826;">View</div>
<svg class="abs ic" style="left:1801px;top:1014px;color:#2a2826;stroke-width:2" width="15" height="15" viewBox="0 0 24 24"><path d="M20 6 9 17l-5-5"/></svg>
<div class="t r" style="left:1831.50px;top:1016.46px;font-size:13.00px;color:#2a2826;">Ack</div>
</div></body></html>
